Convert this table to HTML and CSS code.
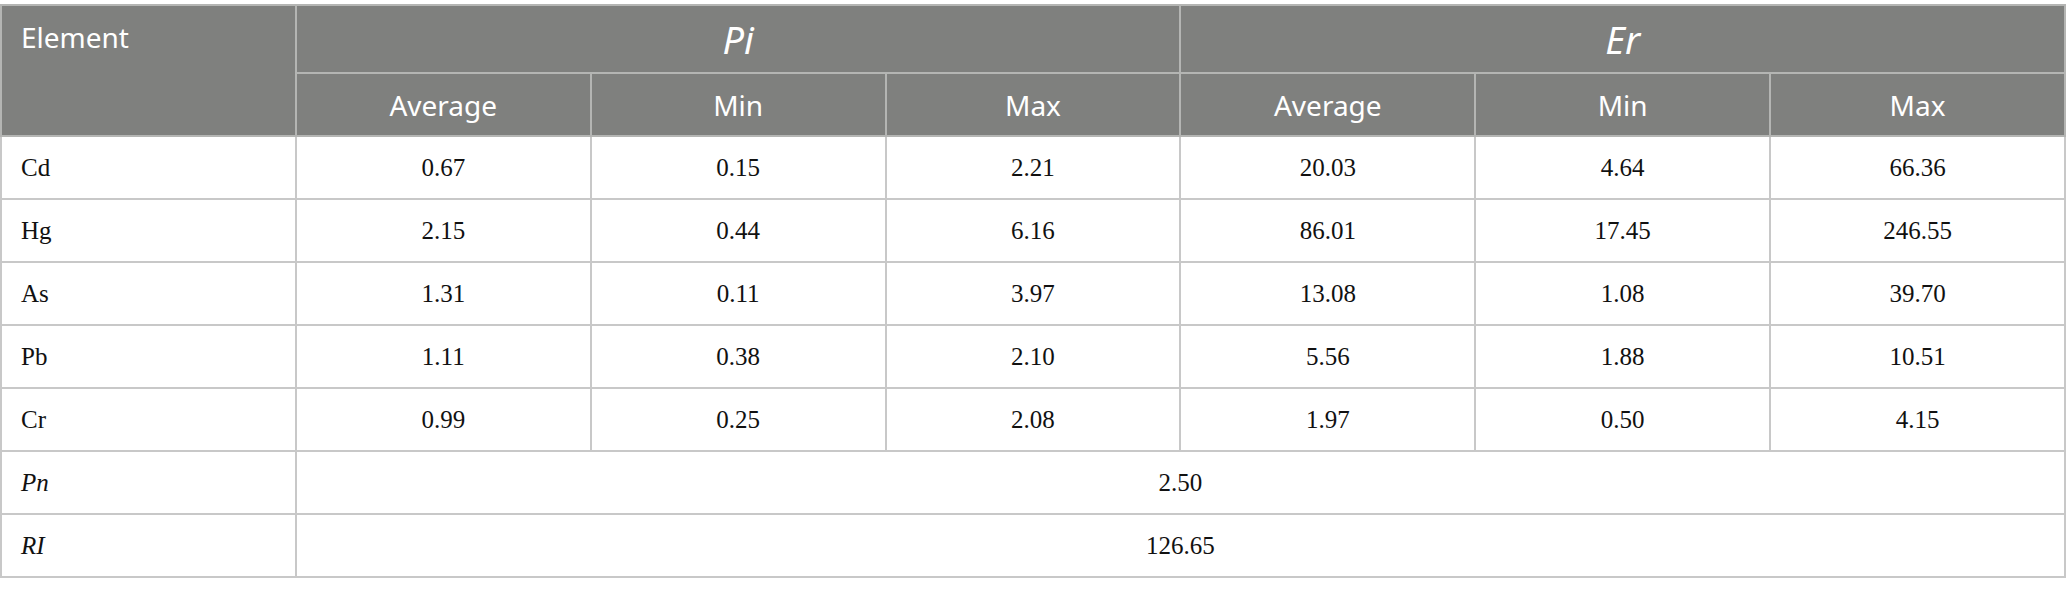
FILE: index.html
```html
<!DOCTYPE html>
<html>
<head>
<meta charset="utf-8">
<link rel="stylesheet" href="styles.css">
</head>
<body>
<div class="wrap">
<table class="data">
  <colgroup>
    <col class="c"><col class="c"><col class="c"><col class="c"><col class="c"><col class="c"><col class="c">
  </colgroup>
  <thead>
    <tr class="h1">
      <th rowspan="2" class="elem">Element</th>
      <th colspan="3" class="grp"><i>Pi</i></th>
      <th colspan="3" class="grp"><i>Er</i></th>
    </tr>
    <tr class="h2">
      <th>Average</th><th>Min</th><th>Max</th>
      <th>Average</th><th>Min</th><th>Max</th>
    </tr>
  </thead>
  <tbody>
    <tr><td class="lbl">Cd</td><td>0.67</td><td>0.15</td><td>2.21</td><td>20.03</td><td>4.64</td><td>66.36</td></tr>
    <tr><td class="lbl">Hg</td><td>2.15</td><td>0.44</td><td>6.16</td><td>86.01</td><td>17.45</td><td>246.55</td></tr>
    <tr><td class="lbl">As</td><td>1.31</td><td>0.11</td><td>3.97</td><td>13.08</td><td>1.08</td><td>39.70</td></tr>
    <tr><td class="lbl">Pb</td><td>1.11</td><td>0.38</td><td>2.10</td><td>5.56</td><td>1.88</td><td>10.51</td></tr>
    <tr><td class="lbl">Cr</td><td>0.99</td><td>0.25</td><td>2.08</td><td>1.97</td><td>0.50</td><td>4.15</td></tr>
    <tr><td class="lbl"><i>Pn</i></td><td colspan="6">2.50</td></tr>
    <tr><td class="lbl"><i>RI</i></td><td colspan="6">126.65</td></tr>
  </tbody>
</table>
</div>
</body>
</html>
```

FILE: styles.css
```css
html, body {
  margin: 0;
  padding: 0;
  background: #ffffff;
}

.wrap {
  padding-top: 4px;
  width: 2067px;
}

.data {
  width: 2066px;
  border-collapse: collapse;
  table-layout: fixed;
}

.data .c {
  width: 14.2857%;
}

.data th {
  background: #7f807e;
  color: #ffffff;
  font-family: "Noto Sans", "Open Sans", sans-serif;
  font-weight: 400;
  font-size: 28px;
  border: 2px solid #b4b5b3;
  padding: 0;
  text-align: center;
}

.data .h1 {
  height: 68px;
}

.data .h2 {
  height: 63px;
}

.data th.elem {
  text-align: left;
  vertical-align: top;
  padding: 12px 0 0 19px;
}

.data th.grp {
  font-size: 38px;
}

.data td {
  font-family: "Liberation Serif", "Times New Roman", serif;
  font-size: 25px;
  color: #111111;
  text-align: center;
  border: 2px solid #c8c8c8;
  height: 63px;
  padding: 0;
  box-sizing: border-box;
}

.data td.lbl {
  text-align: left;
  padding-left: 19px;
}
```
